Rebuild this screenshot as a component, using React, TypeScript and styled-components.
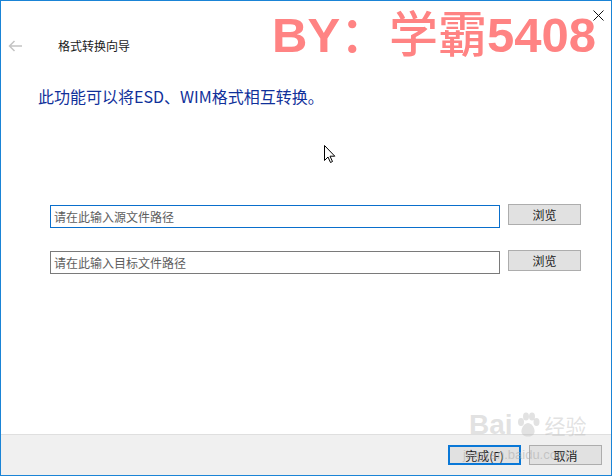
import React from "react";
import styled, { createGlobalStyle } from "styled-components";

const Global = createGlobalStyle`
  html, body { margin: 0; padding: 0; background: #ffffff; }
  body { font-family: "Noto Sans CJK SC", "Noto Sans", sans-serif; }
  * { box-sizing: border-box; }
`;

const Window = styled.div`
  position: relative;
  width: 612px;
  height: 476px;
  border: 1px solid #1a84d6;
  background: #ffffff;
  display: flex;
  flex-direction: column;
  overflow: hidden;
`;

const TitleBar = styled.div`
  height: 30px;
  display: flex;
  justify-content: flex-end;
  align-items: flex-start;
  padding: 9px 7px 0 0;
`;

const CloseButton = styled.div`
  position: relative;
  z-index: 2;
  width: 11px;
  height: 11px;
  display: flex;
`;

const NavRow = styled.div`
  height: 30px;
  display: flex;
  align-items: center;
  padding-left: 7px;
`;

const BackArrow = styled.div`
  width: 15px;
  height: 12px;
  display: flex;
`;

const NavTitle = styled.div`
  margin-left: 35px;
  font-size: 12px;
  color: #1a1a1a;
  line-height: 16px;
`;

const Content = styled.div`
  flex: 1;
  display: flex;
  flex-direction: column;
  padding: 25px 0 0 37px;
`;

const Heading = styled.div`
  font-size: 16px;
  line-height: 20px;
  color: #10309a;
`;

const Form = styled.div`
  display: flex;
  flex-direction: column;
  gap: 22px;
  margin-top: 98px;
  padding-left: 12px;
`;

const Row = styled.div`
  display: flex;
  align-items: flex-start;
  gap: 8px;
`;

const PathInput = styled.div<{ $focused?: boolean }>`
  width: 450px;
  height: 23px;
  margin-top: 1px;
  border: 1px solid ${(p) => (p.$focused ? "#0a6fcc" : "#7a7a7a")};
  padding: 0 0 0 3px;
  font-size: 12px;
  line-height: 20px;
  color: #5e5e5e;
  display: flex;
  align-items: center;
`;

const Button = styled.div<{ $primary?: boolean }>`
  width: 73px;
  height: 21px;
  border: ${(p) => (p.$primary ? "2px solid #0a78d7" : "1px solid #adadad")};
  background: #e1e1e1;
  font-size: 12px;
  color: #1a1a1a;
  display: flex;
  align-items: center;
  justify-content: center;
`;

const Footer = styled.div`
  height: 41px;
  border-top: 1px solid #dfdfdf;
  background: #f0f0f0;
  display: flex;
  justify-content: flex-end;
  align-items: flex-start;
  gap: 8px;
  padding: 10px 9px 0 0;
`;

const FooterButton = styled(Button)`
  height: 20px;
`;

const Watermark = styled.div`
  position: absolute;
  left: 271px;
  top: 1px;
  font-family: "Liberation Sans", "Noto Sans CJK SC", sans-serif;
  font-weight: 700;
  font-size: 49px;
  line-height: 57px;
  color: #ff8383;
  white-space: nowrap;
`;

const WatermarkCjk = styled.span`
  font-family: "Noto Sans CJK SC", sans-serif;
  font-weight: 500;
`;

const Cursor = styled.div`
  position: absolute;
  left: 323px;
  top: 144px;
  width: 12px;
  height: 19px;
  display: flex;
`;

const BaiduMark = styled.div`
  position: absolute;
  left: 468px;
  top: 408px;
  display: flex;
  align-items: center;
  gap: 2px;
  color: rgba(190, 190, 190, 0.45);
  font-family: "Liberation Sans", sans-serif;
  font-weight: 700;
  font-size: 28px;
  line-height: 32px;
  pointer-events: none;
`;

const BaiduCjk = styled.span`
  font-family: "Noto Sans CJK SC", sans-serif;
  font-weight: 400;
  font-size: 21px;
  margin-left: 2px;
`;

const BaiduUrl = styled.div`
  position: absolute;
  left: 462px;
  top: 446px;
  color: rgba(170, 170, 170, 0.55);
  font-family: "Liberation Sans", sans-serif;
  font-size: 13px;
  pointer-events: none;
`;

export default function App() {
  return (
    <>
      <Global />
      <Window>
        <TitleBar>
          <CloseButton>
            <svg width="11" height="11" viewBox="0 0 11 11">
              <path d="M0.5 0.5 L10.5 10.5 M10.5 0.5 L0.5 10.5" stroke="#111" strokeWidth="1" fill="none" />
            </svg>
          </CloseButton>
        </TitleBar>
        <NavRow>
          <BackArrow>
            <svg width="15" height="12" viewBox="0 0 15 12">
              <path d="M14 6 H1.5 M6.5 1 L1.5 6 L6.5 11" stroke="#c4c4c4" strokeWidth="1.5" fill="none" />
            </svg>
          </BackArrow>
          <NavTitle>格式转换向导</NavTitle>
        </NavRow>
        <Content>
          <Heading>此功能可以将ESD、WIM格式相互转换。</Heading>
          <Form>
            <Row>
              <PathInput $focused>请在此输入源文件路径</PathInput>
              <Button>浏览</Button>
            </Row>
            <Row>
              <PathInput>请在此输入目标文件路径</PathInput>
              <Button>浏览</Button>
            </Row>
          </Form>
        </Content>
        <Footer>
          <FooterButton $primary>完成(F)</FooterButton>
          <FooterButton>取消</FooterButton>
        </Footer>
        <Watermark>
          BY<WatermarkCjk>：学霸</WatermarkCjk>5408
        </Watermark>
        <Cursor>
          <svg width="12" height="19" viewBox="0 0 12 19">
            <path d="M0.5 0.5 V15.5 L4 12 L6.5 17.5 L8.5 16.5 L6 11.2 H10.8 Z" fill="#fff" stroke="#000" strokeWidth="1" />
          </svg>
        </Cursor>
        <BaiduMark>
          Bai
          <svg width="26" height="26" viewBox="0 0 26 26">
            <g fill="rgba(190,190,190,0.45)">
              <ellipse cx="6" cy="10" rx="3" ry="4" />
              <ellipse cx="11" cy="4.5" rx="3" ry="4" />
              <ellipse cx="17" cy="4.5" rx="3" ry="4" />
              <ellipse cx="21.5" cy="10" rx="3" ry="4" />
              <path d="M13 11 C8 11 4 20 8 23 C11 25 15 25 18 23 C22 20 18 11 13 11 Z" />
            </g>
          </svg>
          <BaiduCjk>经验</BaiduCjk>
        </BaiduMark>
        <BaiduUrl>jingyan.baidu.com</BaiduUrl>
      </Window>
    </>
  );
}
